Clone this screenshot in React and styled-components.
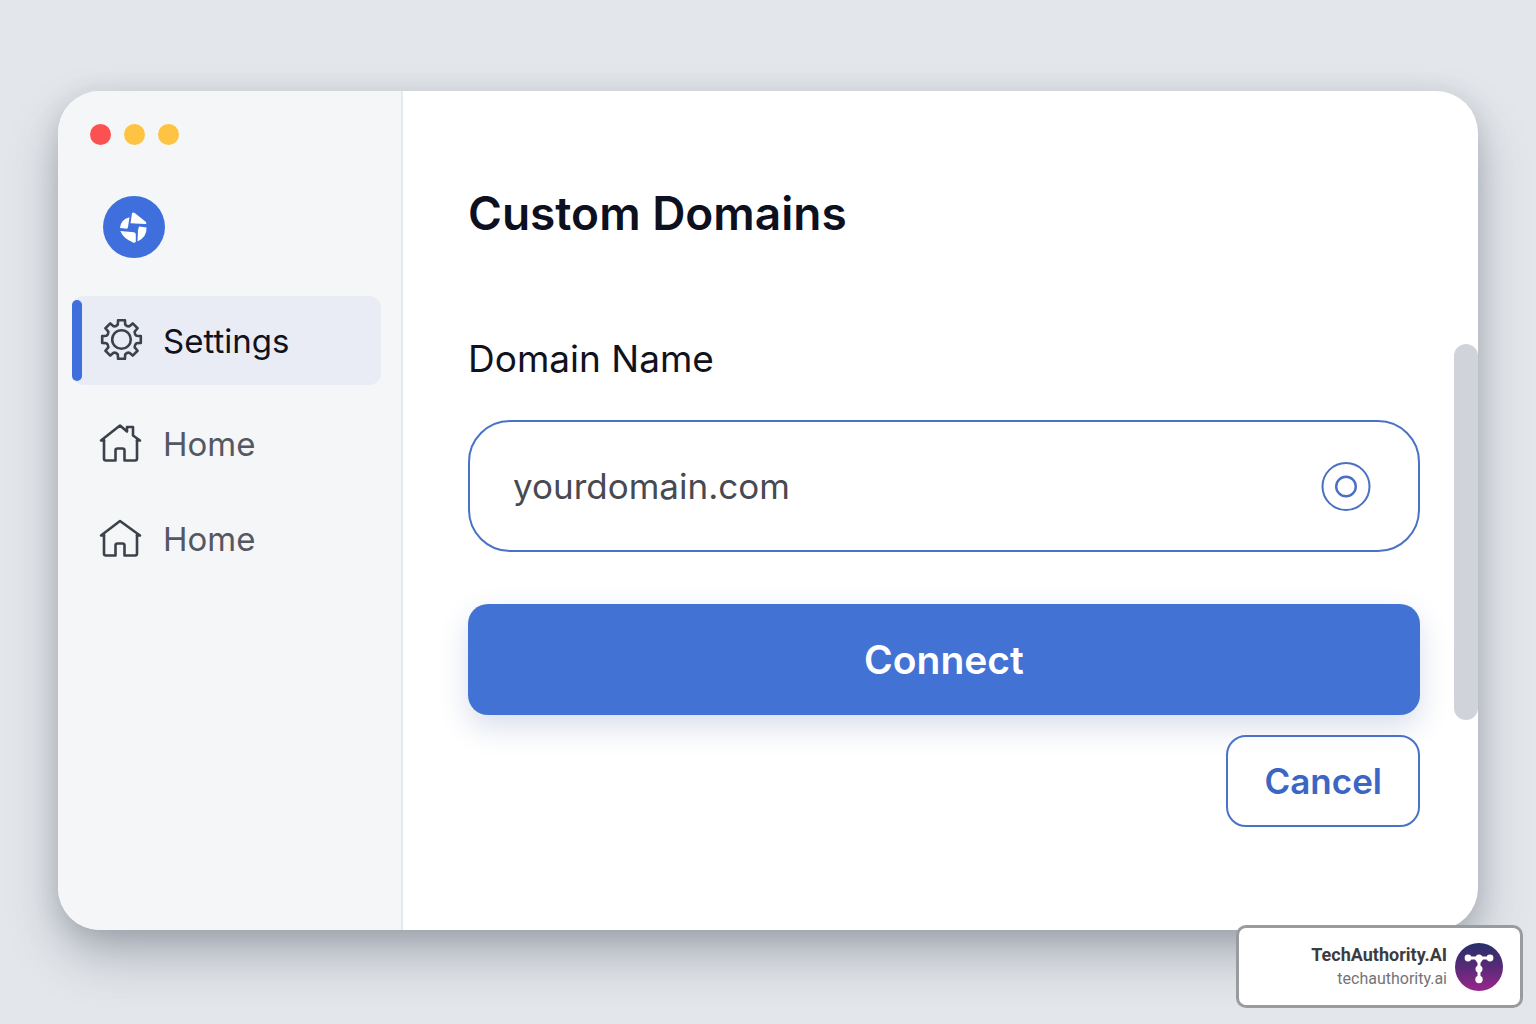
import React, { useState } from 'react'
import styled, { createGlobalStyle } from 'styled-components'

export default function App() {
  const [domain, setDomain] = useState('')

  function onSubmit(event) {
    event.preventDefault()
  }

  return (
    <>
      <GlobalStyle />
      <PageStyled>
        <WindowStyled>
          <SidebarStyled>
            <WindowControls>
              <WindowDot color="#fc5151" />
              <WindowDot color="#fcc442" />
              <WindowDot color="#fcc442" />
            </WindowControls>
            <LogoStyled>
              <LogoMark />
            </LogoStyled>
            <NavStyled>
              <NavLink href="#settings" $active>
                <NavMarker $active />
                <GearIcon />
                Settings
              </NavLink>
              <NavLink href="#home">
                <NavMarker />
                <HomeIcon chimney />
                Home
              </NavLink>
              <NavLink href="#home-2">
                <NavMarker />
                <HomeIcon />
                Home
              </NavLink>
            </NavStyled>
          </SidebarStyled>
          <MainStyled>
            <h1>Custom Domains</h1>
            <FormStyled onSubmit={onSubmit}>
              <label htmlFor="domain">Domain Name</label>
              <FieldStyled>
                <input
                  id="domain"
                  type="text"
                  placeholder="yourdomain.com"
                  value={domain}
                  onChange={(event) => setDomain(event.target.value)}
                />
                <IconButton type="button" aria-label="Check domain">
                  <TargetIcon />
                </IconButton>
              </FieldStyled>
              <ConnectButton type="submit">Connect</ConnectButton>
              <CancelButton type="button">Cancel</CancelButton>
            </FormStyled>
          </MainStyled>
          <ScrollTrack>
            <ScrollThumb />
          </ScrollTrack>
        </WindowStyled>
        <BadgeStyled>
          <BadgeText>
            <strong>TechAuthority.AI</strong>
            <a href="#techauthority">techauthority.ai</a>
          </BadgeText>
          <BadgeLogo />
        </BadgeStyled>
      </PageStyled>
    </>
  )
}

function gearPoint(degrees, radius) {
  const angle = ((degrees - 90) * Math.PI) / 180
  const x = 22.5 + radius * Math.cos(angle)
  const y = 20.5 + radius * Math.sin(angle)
  return `${x.toFixed(2)} ${y.toFixed(2)}`
}

// eight teeth with a rounded valley after each one
function gearPath() {
  let path = `M${gearPoint(-14, 15.4)}`
  for (let i = 0; i < 8; i++) {
    const turn = i * 45
    path += `L${gearPoint(turn - 10, 19.6)}`
    path += `L${gearPoint(turn + 10, 19.6)}`
    path += `L${gearPoint(turn + 14, 15.4)}`
    path += `Q${gearPoint(turn + 22.5, 14)} ${gearPoint(turn + 31, 15.4)}`
  }
  return `${path}Z`
}

function GearIcon() {
  return (
    <IconStyled viewBox="0 0 44 44" aria-hidden="true">
      <path d={gearPath()} />
      <circle cx="22.5" cy="20.5" r="9.3" />
    </IconStyled>
  )
}

function HomeIcon({ chimney }) {
  const roof = chimney
    ? 'M5 18.5H2L21 3.5L28 9.5V5H34V13.5L41 18.5H38'
    : 'M5 18.5H2L21 4L41 18.5H38'
  return (
    <IconStyled viewBox="0 0 44 44" aria-hidden="true">
      <path d={roof} />
      <path d="M5 18V36.500Q5 38.500 7 38.500H16.500V28.500Q16.500 26.500 18.500 26.500H23.500Q25.500 26.500 25.500 28.500V38.500H36Q38 38.500 38 36.500V18" />
    </IconStyled>
  )
}

function LogoMark() {
  return (
    <svg width="62" height="62" viewBox="0 0 62 62" aria-hidden="true">
      <g fill="#ffffff">
        <path d="M29 17.2Q30.500 16 32 17.2L43 26Q44 28 42 28L27.5 27.2Z" />
        <path d="M26.5 21.2L25 31L24.2 32.8L17 32Q17.5 23.5 26.5 21.2Z" />
        <path d="M17.3 35L31 36.2Q32.8 36.5 32.8 38.5V45.5Q32 47.5 30 46.5Q20.5 42.5 17.3 35Z" />
        <path d="M36 30.6L43.5 31.5Q44 41 34.5 45.5L35 34Z" />
      </g>
    </svg>
  )
}

function TargetIcon() {
  return (
    <svg width="50" height="50" viewBox="0 0 50 50" fill="none" aria-hidden="true">
      <circle cx="25" cy="25.5" r="23.5" stroke="#4a6fc4" strokeWidth="2" />
      <circle cx="25" cy="25.5" r="9.8" stroke="#4a6fc4" strokeWidth="2.4" />
    </svg>
  )
}

function BadgeLogo() {
  return (
    <svg width="48" height="48" viewBox="0 0 48 48" aria-hidden="true">
      <defs>
        <linearGradient id="badge-fill" x1="0" y1="0" x2="0" y2="1">
          <stop offset="0" stopColor="#27306b" />
          <stop offset="0.5" stopColor="#582a78" />
          <stop offset="1" stopColor="#98278c" />
        </linearGradient>
      </defs>
      <circle cx="24" cy="24" r="24" fill="url(#badge-fill)" />
      <g fill="#ffffff">
        <path d="M13 13.5H35V16.500H28L25.500 20V36H22.500V20L20 16.500H13Z" />
        <circle cx="13" cy="15" r="3.4" />
        <circle cx="24" cy="15" r="3.5" />
        <circle cx="35" cy="15" r="3.4" />
        <circle cx="24" cy="26" r="3.5" />
        <circle cx="24" cy="36.5" r="3.7" />
      </g>
    </svg>
  )
}

const GlobalStyle = createGlobalStyle`
  * {
    box-sizing: border-box;
  }

  body {
    margin: 0;
    background: #e3e6ea;
    font-family: Inter, 'Liberation Sans', sans-serif;
  }

  button,
  input {
    font-family: inherit;
  }
`
const PageStyled = styled.div`
  display: flex;
  min-height: 100vh;
  padding: 91px 58px 94px;
`
const WindowStyled = styled.div`
  display: flex;
  flex: 1;
  overflow: hidden;
  border-radius: 42px;
  background: #ffffff;
  box-shadow: 0 26px 52px -4px rgba(70, 78, 95, 0.4),
    0 4px 24px rgba(70, 78, 95, 0.16);
`
const SidebarStyled = styled.aside`
  flex: none;
  width: 345px;
  padding: 33px 20px 33px 14px;
  border-right: 2px solid #e4e8f0;
  background: #f5f6f8;
`
const WindowControls = styled.div`
  display: flex;
  gap: 13px;
  padding-left: 18px;
`
const WindowDot = styled.span`
  width: 21px;
  height: 21px;
  border-radius: 50%;
  background: ${({ color }) => color};
`
const LogoStyled = styled.div`
  width: 62px;
  height: 62px;
  margin: 51px 0 38px 31px;
  border-radius: 50%;
  background: #3f6fdc;
`
const NavStyled = styled.nav`
  display: flex;
  flex-direction: column;
  gap: 6px;
`
const NavLink = styled.a`
  display: flex;
  align-items: center;
  height: 89px;
  margin-bottom: ${({ $active }) => ($active ? '8px' : '0')};
  padding: 4px 0;
  border-radius: 12px;
  background: ${({ $active }) => ($active ? '#e9ecf4' : 'transparent')};
  color: ${({ $active }) => ($active ? '#10121c' : '#555863')};
  font-size: 33px;
  text-decoration: none;
`
const NavMarker = styled.span`
  align-self: stretch;
  width: 10px;
  border-radius: 5px;
  background: ${({ $active }) => ($active ? '#3f6fdc' : 'transparent')};
`
const IconStyled = styled.svg`
  width: 44px;
  height: 44px;
  margin: 0 20px 0 17px;
  fill: none;
  stroke: #3d414b;
  stroke-width: 2.6;
  stroke-linejoin: round;
  stroke-linecap: round;
`
const MainStyled = styled.main`
  flex: 1;
  min-width: 0;
  padding: 94px 34px 94px 65px;

  h1 {
    margin: 0;
    color: #0d101f;
    font-size: 46px;
    font-weight: 600;
    line-height: 56px;
  }
`
const FormStyled = styled.form`
  display: flex;
  flex-direction: column;
  margin-top: 94px;

  label {
    color: #10121c;
    font-size: 37px;
    line-height: 48px;
  }
`
const FieldStyled = styled.div`
  display: flex;
  align-items: center;
  height: 132px;
  margin-top: 37px;
  padding: 0 47px 0 43px;
  border: 2px solid #4a72c8;
  border-radius: 42px;

  input {
    flex: 1;
    min-width: 0;
    padding: 0;
    border: 0;
    outline: 0;
    background: none;
    color: #484a52;
    font-size: 35px;
  }

  input::placeholder {
    color: #484a52;
    opacity: 1;
  }
`
const IconButton = styled.button`
  display: flex;
  padding: 0;
  border: 0;
  background: none;
  cursor: pointer;
`
const ConnectButton = styled.button`
  height: 111px;
  margin-top: 52px;
  border: 0;
  border-radius: 20px;
  background: #4272d3;
  box-shadow: 0 12px 30px rgba(66, 90, 160, 0.2);
  color: #ffffff;
  font-size: 39px;
  font-weight: 600;
  cursor: pointer;
`
const CancelButton = styled.button`
  align-self: flex-end;
  height: 92px;
  margin-top: 20px;
  padding: 0 36px;
  border: 2px solid #4a72c8;
  border-radius: 20px;
  background: rgba(255, 255, 255, 0.6);
  color: #3b66c4;
  font-size: 35px;
  font-weight: 600;
  cursor: pointer;
`
const ScrollTrack = styled.div`
  width: 24px;
  padding-top: 253px;
`
const ScrollThumb = styled.div`
  height: 376px;
  border-radius: 12px;
  background: #d0d4da;
`
const BadgeStyled = styled.div`
  position: absolute;
  right: 13px;
  bottom: 16px;
  display: flex;
  align-items: center;
  justify-content: flex-end;
  gap: 8px;
  width: 287px;
  height: 83px;
  padding-right: 17px;
  border: 3px solid #999c9f;
  border-radius: 10px;
  background: #ffffff;
  font-family: Roboto, sans-serif;
`
const BadgeText = styled.div`
  display: flex;
  flex-direction: column;
  align-items: flex-end;
  line-height: 24px;

  strong {
    color: #3c3c3e;
    font-size: 18px;
  }

  a {
    color: #747476;
    font-size: 16px;
    text-decoration: none;
  }
`
